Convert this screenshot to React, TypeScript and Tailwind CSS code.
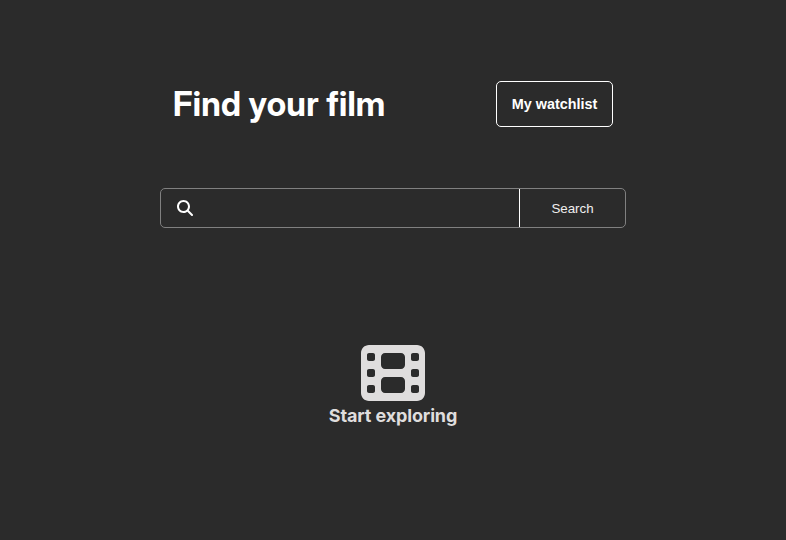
import { FaFilm, FaMagnifyingGlass } from "react-icons/fa6";

export default function App() {
  return (
    <main className="flex h-[540px] w-full flex-col items-center bg-[#2b2b2b] pt-[81px] font-['Inter',sans-serif] text-white">
      <header className="flex h-[46px] w-[440px] items-center justify-between">
        <h1 className="[font-family:'Inter_Display',Inter,sans-serif] text-[33.4px] leading-[46px] font-bold tracking-[0.26px] whitespace-nowrap">Find your film</h1>
        <button className="h-[46px] w-[117px] rounded-[5px] border border-white font-['Liberation_Sans',sans-serif] text-[14.4px] leading-4 font-bold whitespace-nowrap">
          My watchlist
        </button>
      </header>
      <form className="mt-[61px] flex h-[40px] w-[466px] rounded-[5px] border border-[#808080]">
        <label className="flex flex-1 items-center pl-4">
          <FaMagnifyingGlass className="size-4 shrink-0" />
          <input type="text" aria-label="Film title" className="min-w-0 flex-1 bg-transparent px-3 outline-none" />
        </label>
        <button type="button" className="w-[106px] border-l border-white pt-px font-['Liberation_Sans',sans-serif] text-[13.333px] leading-[15px] text-[#f0eeee]">
          Search
        </button>
      </form>
      <section className="mt-[113px] flex flex-col items-center text-[#dfdddd]">
        <FaFilm className="size-16" />
        <p className="text-[18px] leading-[22px] font-bold tracking-[-0.14px]">Start exploring</p>
      </section>
    </main>
  );
}
